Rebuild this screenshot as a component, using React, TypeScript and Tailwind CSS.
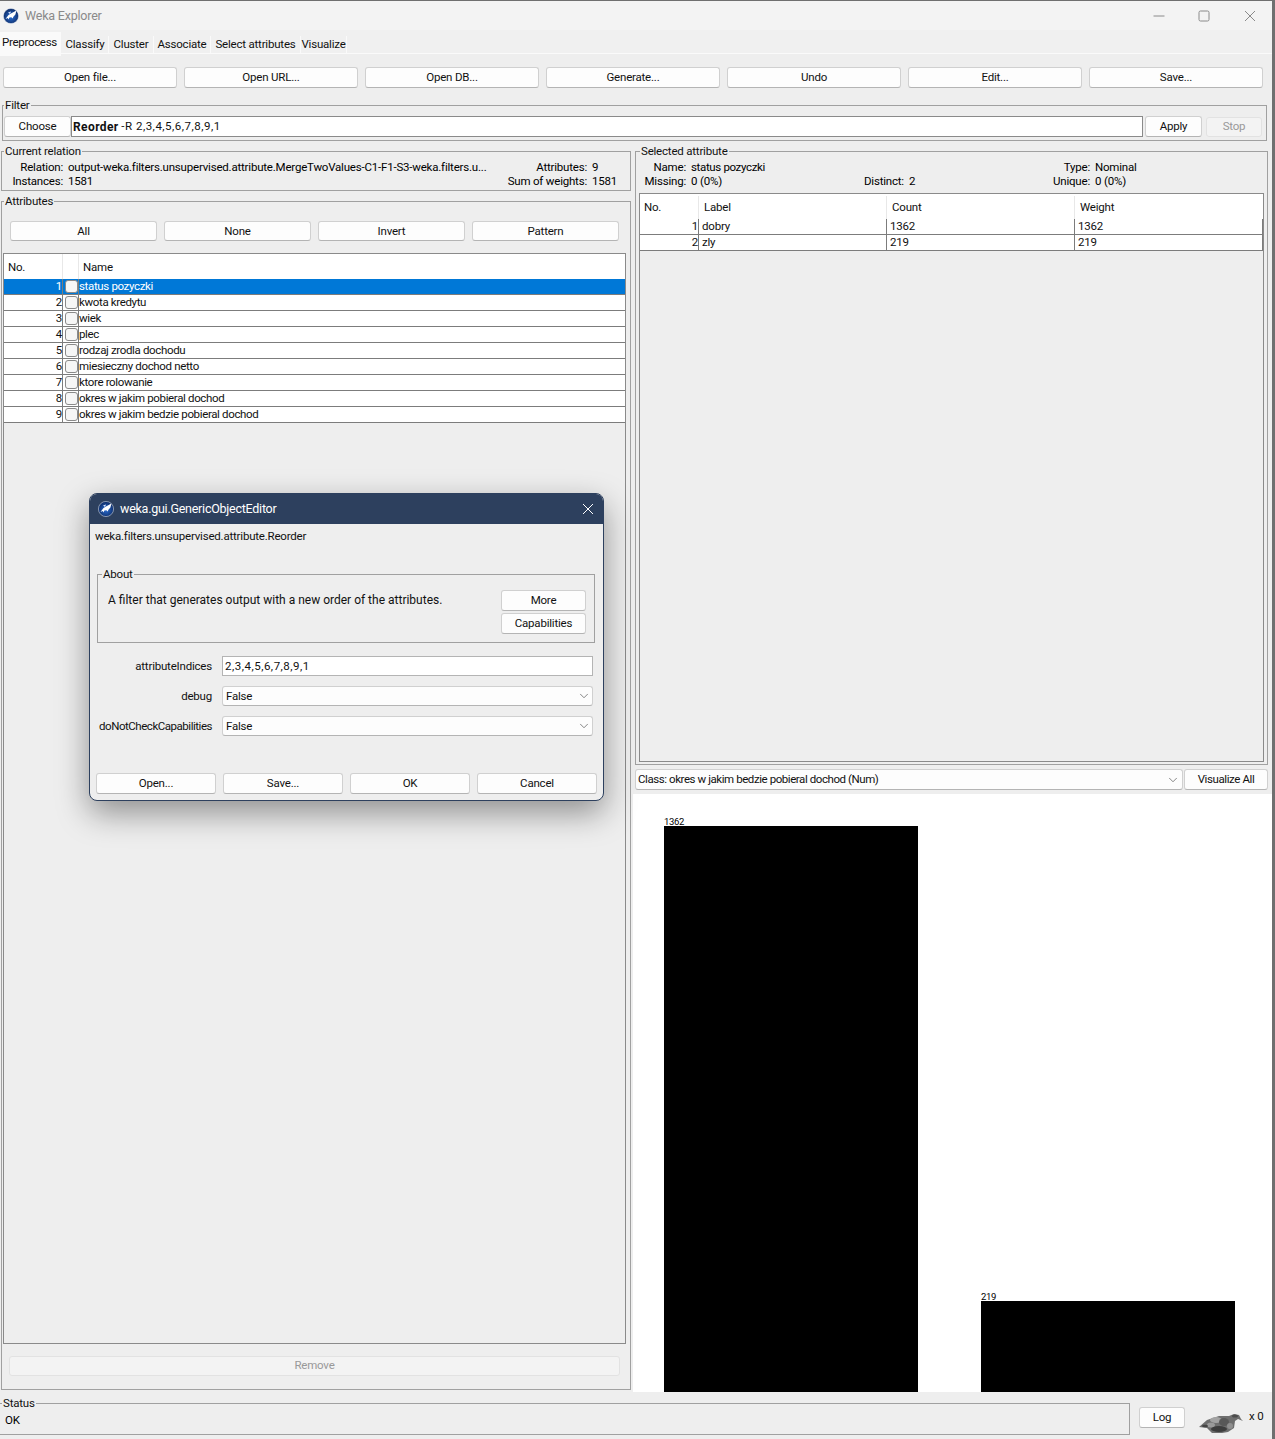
import React from 'react';
import { ChevronDown } from 'lucide-react';

const topButtons = ['Open file...', 'Open URL...', 'Open DB...', 'Generate...', 'Undo', 'Edit...', 'Save...'];
const tabs = [
  { label: 'Classify', w: 'w-[47px]' },
  { label: 'Cluster', w: 'w-[45px]' },
  { label: 'Associate', w: 'w-[57px]' },
  { label: 'Select attributes', w: 'w-[90px]' },
  { label: 'Visualize', w: 'w-[46px]' },
];
const attributes = [
  'status pozyczki',
  'kwota kredytu',
  'wiek',
  'plec',
  'rodzaj zrodla dochodu',
  'miesieczny dochod netto',
  'ktore rolowanie',
  'okres w jakim pobieral dochod',
  'okres w jakim bedzie pobieral dochod',
];
const labels = [
  { no: 1, label: 'dobry', count: 1362, weight: 1362 },
  { no: 2, label: 'zly', count: 219, weight: 219 },
];

const Btn = ({ className = '', children }: { className?: string; children: React.ReactNode }) => (
  <button className={`flex items-center justify-center rounded-[3px] border border-[#d0d0d0] border-b-[#b4b4b4] bg-[#fdfdfd] text-[#111] ${className}`}>
    {children}
  </button>
);

const Group = ({ title, className = '', children }: { title: string; className?: string; children: React.ReactNode }) => (
  <fieldset className={`border border-[#a0a0a0] ${className}`}>
    <legend className="ml-[1px] h-4 px-[1px] leading-[16px] text-[#111]">{title}</legend>
    {children}
  </fieldset>
);

const WekaIcon = ({ id }: { id: string }) => (
  <svg viewBox="0 0 16 16" className="h-4 w-4 shrink-0">
    <defs>
      <radialGradient id={id} cx="0.5" cy="0.55" r="0.55">
        <stop offset="0" stopColor="#2a6fd6" />
        <stop offset="1" stopColor="#0d2a63" />
      </radialGradient>
    </defs>
    <circle cx="8" cy="8" r="7.6" fill={`url(#${id})`} stroke="#e8eef8" strokeWidth="0.5" />
    <path d="M2.5 11 L5.5 7 L8 5.4 L13.4 2.6 L12.4 6.6 L10.4 8.8 L9.6 10.6 L8.4 9.2 L6.4 9.6 L5.4 11.6 L4.8 10 Z" fill="#fff" />
    <path d="M5 4.4 L8 3.4 L7 6 Z" fill="#dbe7ff" />
  </svg>
);

const Bird = () => (
  <svg viewBox="0 0 60 32" className="h-8 w-[60px] shrink-0">
    <path d="M7 21 L15 14 L27 10 L37 10 L42 8 L47 9 L49 13 L51 15 L46 13 L43 15 L42 22 L36 26 L30 27 L20 27 L15 22 Z" fill="#6e6e6e" />
    <ellipse cx="24" cy="14" rx="6" ry="3" fill="#a2a2a2" />
    <ellipse cx="32" cy="16" rx="5" ry="4" fill="#585858" />
    <ellipse cx="19" cy="19" rx="4" ry="2.5" fill="#9a9a9a" />
    <ellipse cx="27" cy="23" rx="8" ry="3" fill="#3d3d3d" />
    <ellipse cx="38" cy="20" rx="3" ry="3" fill="#8f8f8f" />
    <ellipse cx="43" cy="10" rx="3" ry="1.6" fill="#4c4c4c" />
    <ellipse cx="13" cy="20" rx="3" ry="1.2" fill="#444" />
  </svg>
);

const AttributeRow = ({ no, name, selected }: { no: number; name: string; selected: boolean }) => (
  <div className={`flex h-4 border-b border-[#7c7c7c] leading-[15px] ${selected ? 'bg-[#0078d7] text-white' : 'bg-white text-[#111]'}`}>
    <div className="w-[59px] border-r border-[#7c7c7c] text-right">{no}</div>
    <div className="flex w-[16px] items-center justify-center border-r border-[#7c7c7c] pl-[1px]">
      <div className="h-[13px] w-[13px] rounded-[3px] border border-[#8a8a8a] bg-[#f6f6f6]" />
    </div>
    <div className="flex-1 tracking-[-0.35px]">{name}</div>
  </div>
);

const DialogRow = ({ label, value, select, tight }: { label: string; value: string; select?: boolean; tight?: boolean }) => (
  <div className="flex h-5 items-center">
    <div className={`w-[127px] whitespace-nowrap pr-[10px] pt-[1px] text-right text-[#111] ${tight ? 'tracking-[-0.47px]' : ''}`}>{label}</div>
    <div className={`flex h-5 w-[371px] items-center border ${select ? 'rounded-[3px] border-[#d0d0d0] border-b-[#b4b4b4] bg-[#fdfdfd] pl-[3px]' : 'border-[#b4b4b4] bg-white pl-[2px] tracking-[0.5px]'}`}>
      <span className="flex-1 pt-[1px] text-[#111]">{value}</span>
      {select && <ChevronDown className="mr-[1px] h-[14px] w-[14px] text-[#555]" strokeWidth={1.2} />}
    </div>
  </div>
);

const App: React.FC = () => {
  return (
    <div className="relative h-[1439px] w-[1275px] overflow-hidden border-t border-r-[3px] border-[#6f6f6f] bg-[#eeeeee] text-[11.5px] tracking-[-0.2px]" style={{ fontFamily: 'Roboto, sans-serif' }}>
      {/* Title bar */}
      <div className="flex h-[29px] items-center bg-[#f3f3f3] pl-[3px]">
        <WekaIcon id="weka-main" />
        <span className="ml-[6px] pt-[1px] text-[12.5px] text-[#8a8a8a]">Weka Explorer</span>
        <div className="ml-auto flex items-center text-[#8a8a8a]">
          <svg viewBox="0 0 12 12" className="mr-[33px] h-3 w-3"><path d="M0.5 6 H11.5" stroke="currentColor" /></svg>
          <svg viewBox="0 0 12 12" className="mr-[34px] h-3 w-3"><rect x="1" y="1" width="10" height="10" rx="1.5" fill="none" stroke="currentColor" /></svg>
          <svg viewBox="0 0 12 12" className="mr-[16px] h-3 w-3"><path d="M1 1 L11 11 M11 1 L1 11" stroke="currentColor" /></svg>
        </div>
      </div>

      {/* Tabs */}
      <div className="flex h-[23px] items-end bg-[#f0f0f0]">
        <div className="z-10 mb-[-3px] flex h-6 w-[61px] items-center justify-start bg-[#fafafa] pb-[3px] pl-[2px] tracking-[-0.3px] text-[#111]">Preprocess</div>
        <div className="ml-[1px] flex self-start pt-[6px]">
          {tabs.map((t) => (
            <div key={t.label} className={`flex h-[17px] items-center justify-center border-r border-[#fafafa] bg-[#f0f0f0] text-[#111] ${t.w}`}>{t.label}</div>
          ))}
        </div>
      </div>

      {/* Preprocess panel */}
      <div className="border-t border-[#fafafa]">
        <div className="flex gap-[7px] pl-[3px] pt-[13px]">
          {topButtons.map((b) => (
            <Btn key={b} className="h-[21px] w-[174px]">{b}</Btn>
          ))}
        </div>

        <Group title="Filter" className="ml-[2px] mt-[9px] h-[44px] w-[1265px]">
          <div className="flex items-center pl-[1px] pt-[3px]">
            <Btn className="h-[21px] w-[67px]">Choose</Btn>
            <div className="flex h-[21px] w-[1072px] items-center border border-[#8a8a8a] bg-white pl-[1px] text-[#111]">
              <b className="text-[12px] tracking-[0.4px]">Reorder</b>&nbsp;<span className="tracking-[0.5px]">-R 2,3,4,5,6,7,8,9,1</span>
            </div>
            <Btn className="ml-[2px] h-[21px] w-[57px]">Apply</Btn>
            <button className="ml-[4px] flex h-[20px] w-[56px] items-center justify-center rounded-[3px] border border-[#e2e2e2] bg-[#f3f3f3] text-[#999]">Stop</button>
          </div>
        </Group>

        <div className="mt-[2px] flex">
          {/* Left column */}
          <div className="ml-[1px] flex w-[630px] shrink-0 flex-col">
            <Group title="Current relation" className="h-[48px] pl-[1px] pr-[13px]">
              <div className="flex h-[14px] items-center whitespace-nowrap pt-[3px]">
                <span className="w-[60px] text-right">Relation:</span>
                <span className="ml-[5px]">output-weka.filters.unsupervised.attribute.MergeTwoValues-C1-F1-S3-weka.filters.u...</span>
                <span className="ml-auto w-[80px] text-right">Attributes:</span>
                <span className="ml-[5px] w-[25px]">9</span>
              </div>
              <div className="flex h-[14px] items-center whitespace-nowrap pt-[3px]">
                <span className="w-[60px] text-right">Instances:</span>
                <span className="ml-[5px]">1581</span>
                <span className="ml-auto w-[90px] text-right">Sum of weights:</span>
                <span className="ml-[5px] w-[25px]">1581</span>
              </div>
            </Group>

            <Group title="Attributes" className="mt-[2px] h-[1197px] pl-[1px] pr-[2px]">
              <div className="flex gap-[7px] pl-[7px] pt-[12px]">
                {['All', 'None', 'Invert', 'Pattern'].map((b) => (
                  <Btn key={b} className="h-[20px] w-[147px] pt-[1px]">{b}</Btn>
                ))}
              </div>
              <div className="mt-[12px] h-[1091px] w-[623px] border border-[#8a8a8a]">
                <div className="flex h-[25px] items-center bg-white text-[#111]">
                  <div className="flex h-full w-[59px] items-center border-r border-[#e8e8e8] pl-[4px] pt-[2px]">No.</div>
                  <div className="h-full w-[16px] border-r border-[#e8e8e8]" />
                  <div className="pl-[4px] pt-[2px]">Name</div>
                </div>
                {attributes.map((a, i) => (
                  <AttributeRow key={a} no={i + 1} name={a} selected={i === 0} />
                ))}
              </div>
              <button className="ml-[6px] mt-[12px] flex h-[20px] w-[611px] items-center justify-center rounded-[3px] border border-[#e2e2e2] bg-[#f3f3f3] text-[#999]">Remove</button>
            </Group>
          </div>

          {/* Right column */}
          <div className="ml-[4px] flex w-[637px] shrink-0 flex-col">
            <Group title="Selected attribute" className="h-[622px] w-[632px] pl-[3px] pr-[3px]">
              <div className="flex h-[14px] items-center pt-[3px]">
                <span className="w-[47px] text-right">Name:</span>
                <span className="ml-[5px] tracking-[-0.35px]">status pozyczki</span>
                <span className="ml-auto w-[60px] text-right">Type:</span>
                <span className="ml-[5px] w-[169px]">Nominal</span>
              </div>
              <div className="flex h-[14px] items-center whitespace-nowrap pt-[3px]">
                <span className="w-[47px] text-right">Missing:</span>
                <span className="ml-[5px] w-[173px]">0 (0%)</span>
                <span className="w-[39px] text-right">Distinct:</span>
                <span className="ml-[6px]">2</span>
                <span className="ml-auto w-[60px] text-right">Unique:</span>
                <span className="ml-[5px] w-[169px]">0 (0%)</span>
              </div>
              <div className="mt-[6px] h-[569px] w-[625px] border border-[#8a8a8a]">
                <div className="flex h-[25px] items-center bg-white pt-[2px] text-[#111]">
                  <div className="flex h-full w-[59px] items-center border-r border-[#e8e8e8] pl-[4px]">No.</div>
                  <div className="flex h-full w-[188px] items-center border-r border-[#e8e8e8] pl-[5px]">Label</div>
                  <div className="flex h-full w-[188px] items-center border-r border-[#e8e8e8] pl-[5px]">Count</div>
                  <div className="pl-[5px]">Weight</div>
                </div>
                {labels.map((l) => (
                  <div key={l.no} className="flex h-4 border-b border-[#7c7c7c] bg-white leading-[15px] text-[#111]">
                    <div className="w-[59px] border-r border-[#7c7c7c] text-right">{l.no}</div>
                    <div className="w-[188px] border-r border-[#7c7c7c] pl-[3px]">{l.label}</div>
                    <div className="w-[188px] border-r border-[#7c7c7c] pl-[3px]">{l.count}</div>
                    <div className="flex-1 border-r border-[#7c7c7c] pl-[3px]">{l.weight}</div>
                  </div>
                ))}
              </div>
            </Group>

            <div className="mt-[4px] flex h-[21px] w-[633px]">
              <div className="flex w-[548px] items-center rounded-[3px] border border-[#d0d0d0] border-b-[#b4b4b4] bg-[#fdfdfd] pl-[2px] text-[#111]">
                <span className="flex-1 tracking-[-0.43px]">Class: okres w jakim bedzie pobieral dochod (Num)</span>
                <ChevronDown className="mr-[2px] h-[14px] w-[14px] text-[#555]" strokeWidth={1.2} />
              </div>
              <Btn className="ml-[1px] h-[21px] w-[84px] tracking-[-0.4px]">Visualize All</Btn>
            </div>

            {/* Histogram */}
            <div className="ml-[-2px] mt-[4px] flex h-[598px] items-end bg-white pl-[31px] text-[9.5px] leading-[8px] tracking-[-0.3px] text-black">
              <div className="flex flex-col items-start">
                <span>1362</span>
                <div className="h-[566px] w-[254px] bg-black" />
              </div>
              <div className="ml-[63px] flex flex-col items-start">
                <span>219</span>
                <div className="h-[91px] w-[254px] bg-black" />
              </div>
            </div>
          </div>
        </div>

        {/* Status bar */}
        <div className="flex items-start">
          <Group title="Status" className="ml-[-2px] mt-[3px] h-[40px] w-[1132px] pl-[2px]">
            <div className="pl-[4px] pt-[1px] leading-[16px]">OK</div>
          </Group>
          <Btn className="ml-[9px] mt-[15px] h-[21px] w-[46px]">Log</Btn>
          <div className="ml-[7px] mt-[14px]"><Bird /></div>
          <span className="ml-[-3px] mt-[16px] whitespace-nowrap text-[#111]">x 0</span>
        </div>
      </div>

      {/* GenericObjectEditor dialog */}
      <div className="absolute left-[89px] top-[492px] flex h-[308px] w-[515px] flex-col overflow-hidden rounded-lg border border-[#2d405e] bg-[#eeeeee] shadow-[0_12px_32px_rgba(0,0,0,0.4)]">
        <div className="flex h-[30px] shrink-0 items-center bg-[#2d405e] pl-[8px] text-white">
          <WekaIcon id="weka-dialog" />
          <span className="ml-[6px] text-[12.5px] tracking-[-0.25px]">weka.gui.GenericObjectEditor</span>
          <svg viewBox="0 0 12 12" className="mb-[1px] ml-auto mr-[9px] h-3 w-3"><path d="M1 1 L11 11 M11 1 L1 11" stroke="#fff" /></svg>
        </div>
        <div className="h-[24px] pl-[5px] pt-[4px] text-[#111]">weka.filters.unsupervised.attribute.Reorder</div>
        <Group title="About" className="ml-[7px] mt-[18px] h-[77px] w-[498px] pl-[3px]">
          <div className="flex items-start pl-[7px] pr-[8px]">
            <span className="mt-[9px] flex-1 text-[12px] tracking-normal text-[#111]">A filter that generates output with a new order of the attributes.</span>
            <div className="flex w-[85px] flex-col gap-[2px] pt-[8px]">
              <Btn className="h-[21px]">More</Btn>
              <Btn className="h-[21px]">Capabilities</Btn>
            </div>
          </div>
        </Group>
        <div className="ml-[5px] mt-[13px] flex flex-col gap-[10px]">
          <DialogRow label="attributeIndices" value="2,3,4,5,6,7,8,9,1" />
          <DialogRow label="debug" value="False" select />
          <DialogRow label="doNotCheckCapabilities" value="False" select tight />
        </div>
        <div className="ml-[6px] mt-[37px] flex gap-[7px]">
          {['Open...', 'Save...', 'OK', 'Cancel'].map((b) => (
            <Btn key={b} className="h-[21px] w-[120px]">{b}</Btn>
          ))}
        </div>
      </div>
    </div>
  );
};

export default App;
